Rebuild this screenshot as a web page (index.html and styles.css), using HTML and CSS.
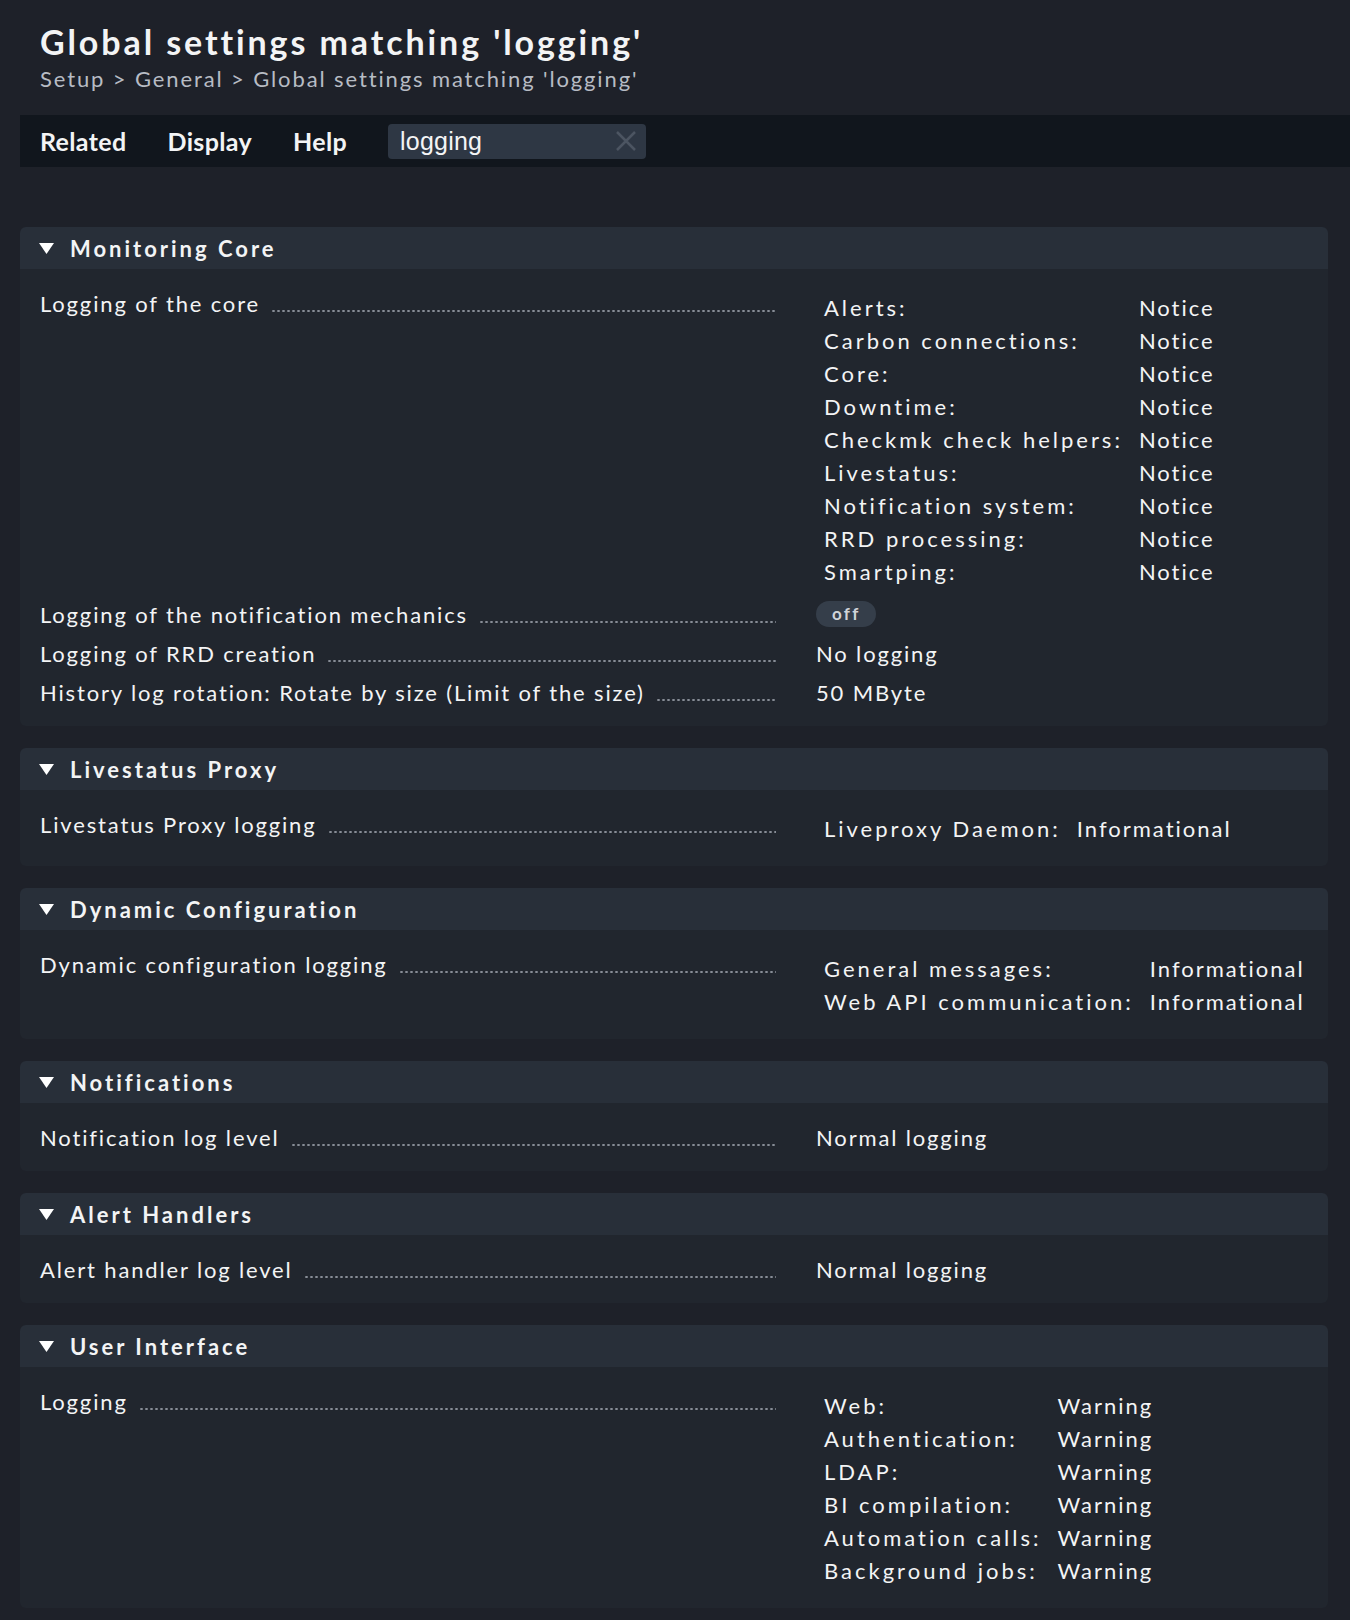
FILE: index.html
```html
<!DOCTYPE html>
<html>
<head>
    <title>Global settings matching 'logging'</title>
    <meta charset="utf-8">
    <link rel="stylesheet" href="styles.css">
</head>
<body>
    <div class="titlebar">
        <h1>Global settings matching 'logging'</h1>
        <div class="breadcrumb">Setup &gt; General &gt; Global settings matching 'logging'</div>
    </div>

    <div class="pagemenu">
        <span class="menuitem">Related</span>
        <span class="menuitem">Display</span>
        <span class="menuitem">Help</span>
        <div class="searchbox">
            <span>logging</span>
            <svg class="clear" width="22" height="22" viewBox="0 0 22 22"><path d="M2 2 L20 20 M20 2 L2 20"/></svg>
        </div>
    </div>

    <div class="content">
        <div class="section">
            <div class="section-head"><svg class="arrow" width="15" height="11" viewBox="0 0 15 11"><polygon points="0,0 15,0 7.5,11"/></svg>Monitoring Core</div>
            <div class="section-body">
                <div class="row">
                    <div class="label"><span>Logging of the core</span><span class="dots"></span></div>
                    <div class="value">
                        <table class="subvalues">
                            <tr><td>Alerts:</td><td>Notice</td></tr>
                            <tr><td>Carbon connections:</td><td>Notice</td></tr>
                            <tr><td>Core:</td><td>Notice</td></tr>
                            <tr><td>Downtime:</td><td>Notice</td></tr>
                            <tr><td>Checkmk check helpers:</td><td>Notice</td></tr>
                            <tr><td>Livestatus:</td><td>Notice</td></tr>
                            <tr><td>Notification system:</td><td>Notice</td></tr>
                            <tr><td>RRD processing:</td><td>Notice</td></tr>
                            <tr><td>Smartping:</td><td>Notice</td></tr>
                        </table>
                    </div>
                </div>
                <div class="row">
                    <div class="label"><span>Logging of the notification mechanics</span><span class="dots"></span></div>
                    <div class="value"><span class="badge">off</span></div>
                </div>
                <div class="row">
                    <div class="label"><span>Logging of RRD creation</span><span class="dots"></span></div>
                    <div class="value">No logging</div>
                </div>
                <div class="row">
                    <div class="label"><span>History log rotation: Rotate by size (Limit of the size)</span><span class="dots"></span></div>
                    <div class="value">50 MByte</div>
                </div>
            </div>
        </div>

        <div class="section">
            <div class="section-head"><svg class="arrow" width="15" height="11" viewBox="0 0 15 11"><polygon points="0,0 15,0 7.5,11"/></svg>Livestatus Proxy</div>
            <div class="section-body">
                <div class="row">
                    <div class="label"><span>Livestatus Proxy logging</span><span class="dots"></span></div>
                    <div class="value">
                        <table class="subvalues">
                            <tr><td>Liveproxy Daemon:</td><td>Informational</td></tr>
                        </table>
                    </div>
                </div>
            </div>
        </div>

        <div class="section">
            <div class="section-head"><svg class="arrow" width="15" height="11" viewBox="0 0 15 11"><polygon points="0,0 15,0 7.5,11"/></svg>Dynamic Configuration</div>
            <div class="section-body">
                <div class="row">
                    <div class="label"><span>Dynamic configuration logging</span><span class="dots"></span></div>
                    <div class="value">
                        <table class="subvalues">
                            <tr><td>General messages:</td><td>Informational</td></tr>
                            <tr><td>Web API communication:</td><td>Informational</td></tr>
                        </table>
                    </div>
                </div>
            </div>
        </div>

        <div class="section">
            <div class="section-head"><svg class="arrow" width="15" height="11" viewBox="0 0 15 11"><polygon points="0,0 15,0 7.5,11"/></svg>Notifications</div>
            <div class="section-body">
                <div class="row">
                    <div class="label"><span>Notification log level</span><span class="dots"></span></div>
                    <div class="value">Normal logging</div>
                </div>
            </div>
        </div>

        <div class="section">
            <div class="section-head"><svg class="arrow" width="15" height="11" viewBox="0 0 15 11"><polygon points="0,0 15,0 7.5,11"/></svg>Alert Handlers</div>
            <div class="section-body">
                <div class="row">
                    <div class="label"><span>Alert handler log level</span><span class="dots"></span></div>
                    <div class="value">Normal logging</div>
                </div>
            </div>
        </div>

        <div class="section">
            <div class="section-head"><svg class="arrow" width="15" height="11" viewBox="0 0 15 11"><polygon points="0,0 15,0 7.5,11"/></svg>User Interface</div>
            <div class="section-body">
                <div class="row">
                    <div class="label"><span>Logging</span><span class="dots"></span></div>
                    <div class="value">
                        <table class="subvalues">
                            <tr><td>Web:</td><td>Warning</td></tr>
                            <tr><td>Authentication:</td><td>Warning</td></tr>
                            <tr><td>LDAP:</td><td>Warning</td></tr>
                            <tr><td>BI compilation:</td><td>Warning</td></tr>
                            <tr><td>Automation calls:</td><td>Warning</td></tr>
                            <tr><td>Background jobs:</td><td>Warning</td></tr>
                        </table>
                    </div>
                </div>
            </div>
        </div>
    </div>
</body>
</html>
```

FILE: styles.css
```css
body {
    margin: 0;
    background: #1e2129;
    color: #f3f4f5;
    font-family: Lato, "Liberation Sans", sans-serif;
}

.titlebar {
    padding: 21px 40px 0;
}
h1 {
    margin: 0;
    font-size: 34px;
    line-height: 42px;
    font-weight: 700;
    letter-spacing: 2.9px;
}
.breadcrumb {
    margin-top: 3px;
    font-size: 22px;
    line-height: 26px;
    color: #b7bcc4;
    letter-spacing: 1.88px;
}

.pagemenu {
    margin: 23px 0 0 20px;
    height: 52px;
    background: #11161d;
    display: flex;
    align-items: center;
    padding-left: 20px;
}
.menuitem {
    font-weight: 700;
    font-size: 25px;
    letter-spacing: 0.35px;
    margin-right: 41px;
}
.searchbox {
    width: 258px;
    height: 35px;
    box-sizing: border-box;
    background: #2e3744;
    border-radius: 4px;
    display: flex;
    align-items: center;
    justify-content: space-between;
    padding: 0 9px 0 12px;
    font-family: "Liberation Sans", Arial, sans-serif;
    font-size: 25px;
    letter-spacing: 0.2px;
}
.clear path {
    stroke: #4c5562;
    stroke-width: 2.5;
    fill: none;
}

.content {
    padding: 60px 22px 20px 20px;
}
.section {
    margin-bottom: 22px;
}
.section-head {
    height: 42px;
    background: #282f39;
    border-radius: 6px 6px 0 0;
    display: flex;
    align-items: center;
    padding-left: 19px;
    font-weight: 700;
    font-size: 22px;
    letter-spacing: 3px;
}
.arrow {
    margin-right: 16px;
    fill: #ffffff;
}
.section-body {
    background: #21262e;
    border-radius: 0 0 6px 6px;
    padding: 15px 20px 14px;
    font-size: 22px;
    letter-spacing: 1.85px;
    line-height: 33px;
}

.row {
    display: grid;
    grid-template-columns: 736px 1fr;
    column-gap: 40px;
    padding: 3px 0;
}
.label {
    display: flex;
}
.dots {
    flex: 1;
    margin-left: 11px;
    background-image: radial-gradient(circle, #878d96 1px, transparent 1.4px);
    background-size: 5px 4px;
    background-repeat: repeat-x;
    background-position: left 22px;
}

.subvalues {
    border-collapse: collapse;
    margin: 4px 0;
}
.subvalues td {
    padding: 0 8px;
    white-space: nowrap;
}
.subvalues td:first-child {
    letter-spacing: 3px;
}
.subvalues td:last-child {
    letter-spacing: 2px;
}

.badge {
    display: inline-block;
    background: #353e4a;
    border-radius: 13px;
    padding: 0 15px 0 16px;
    font-size: 17px;
    font-weight: 700;
    line-height: 26px;
    letter-spacing: 2.3px;
    color: #d0d3d8;
    vertical-align: 3px;
}
```
